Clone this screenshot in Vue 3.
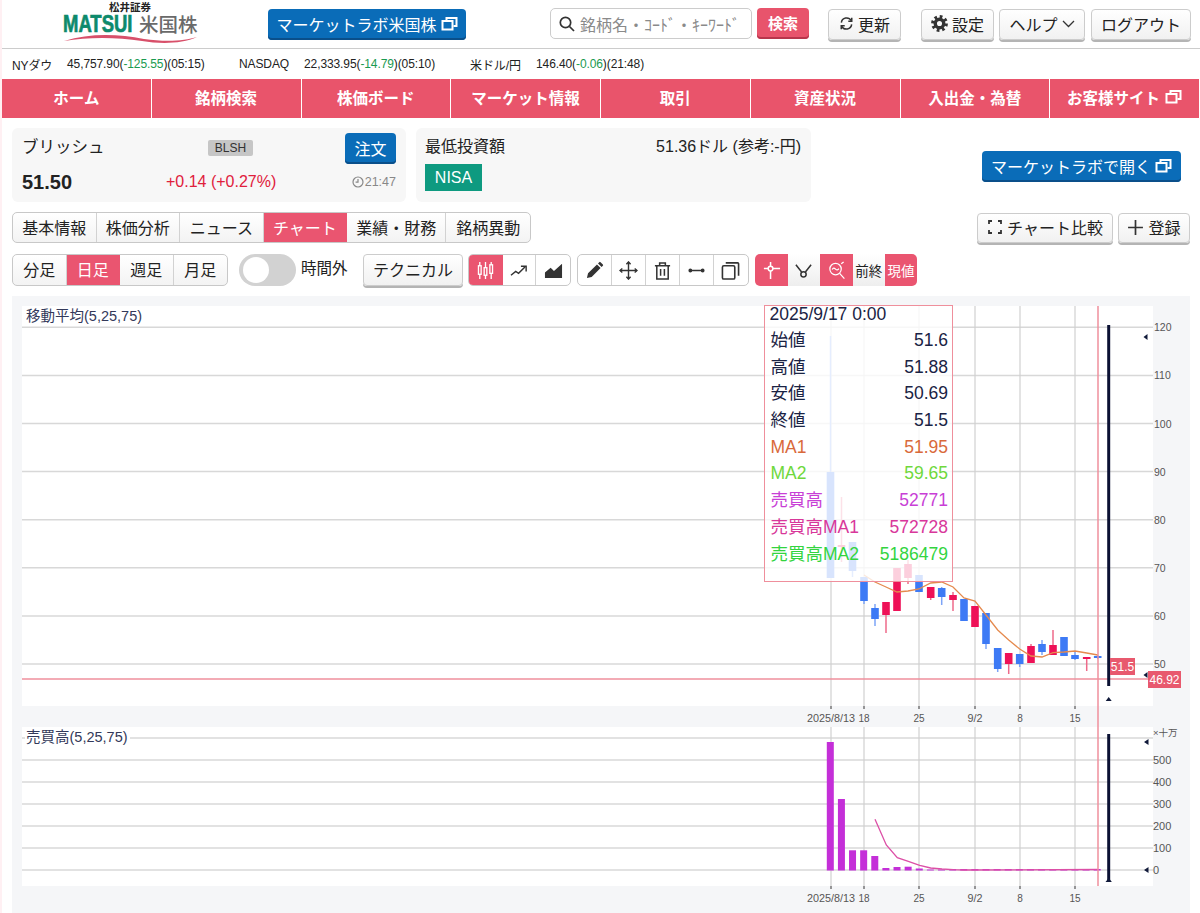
<template>
  <div class="page">
    <header class="top-bar">
      <svg class="logo" width="140" height="44" viewBox="0 0 140 44">
        <text x="47" y="10.5" class="logo-sub">松井証券</text>
        <text transform="translate(1 32) scale(.77 1)" class="logo-main">MATSUI</text>
        <text x="77" y="32" class="logo-jp">米国株</text>
        <path d="M2 41 C 28 33 56 34 82 39 C 103 42 123 41 135 37 C 120 44 98 44 80 41 C 54 37 26 37 2 41 Z" fill="#d8506a" />
      </svg>
      <button class="btn blue lab-top">
        マーケットラボ米国株
        <svg class="win" viewBox="0 0 16 14"><path d="M5 3V1h10v8h-3" /><rect x="1" y="4" width="10" height="8.5" /></svg>
      </button>
      <div class="search">
        <svg width="18" height="18" viewBox="0 0 18 18" fill="none" stroke="#333" stroke-width="1.7"><circle cx="7.5" cy="7.5" r="5.2" /><path d="M11.5 11.5L16 16" /></svg>
        <span>銘柄名・ｺｰﾄﾞ・ｷｰﾜｰﾄﾞ</span>
      </div>
      <button class="btn red search-btn">検索</button>
      <button class="btn plain reload">
        <svg width="15" height="15" viewBox="0 0 16 16" fill="none" stroke="#333" stroke-width="1.6"><path d="M2.5 7A5.6 5.6 0 0 1 13 5" /><path d="M13.5 9A5.6 5.6 0 0 1 3 11" /><path d="M13.6 1.8V5.6H9.9" /><path d="M2.4 14.2V10.4H6.1" /></svg>
        更新
      </button>
      <button class="btn plain settings">
        <svg width="17" height="17" viewBox="0 0 16 16" fill="none" stroke="#333"><circle cx="8" cy="8" r="6.4" stroke-width="3" stroke-dasharray="2.5 2.53" /><circle cx="8" cy="8" r="4" stroke-width="3.2" /></svg>
        設定
      </button>
      <button class="btn plain help">
        ヘルプ
        <svg width="13" height="8" viewBox="0 0 13 8" fill="none" stroke="#333" stroke-width="1.3"><path d="M1 1l5.5 5.5L12 1" /></svg>
      </button>
      <button class="btn plain logout">ログアウト</button>
    </header>

    <div class="ticker">
      <span>NYダウ</span><span>45,757.90(<em>-125.55</em>)(05:15)</span>
      <span>NASDAQ</span><span>22,333.95(<em>-14.79</em>)(05:10)</span>
      <span>米ドル/円</span><span>146.40(<em>-0.06</em>)(21:48)</span>
    </div>

    <nav class="main-nav">
      <a v-for="item in navItems" :key="item" href="#" @click.prevent>{{ item }}</a>
      <a href="#" @click.prevent>
        お客様サイト
        <svg class="win" viewBox="0 0 16 14"><path d="M5 3V1h10v8h-3" /><rect x="1" y="4" width="10" height="8.5" /></svg>
      </a>
    </nav>

    <section class="info-row">
      <div class="card stock">
        <div class="stock-top">
          <span class="stock-name">ブリッシュ</span>
          <span class="code">BLSH</span>
          <button class="btn blue order">注文</button>
        </div>
        <div class="stock-bottom">
          <strong>51.50</strong>
          <span class="change">+0.14 (+0.27%)</span>
          <span class="time">
            <svg width="12" height="12" viewBox="0 0 12 12" fill="none" stroke="#888" stroke-width="1.2"><circle cx="6" cy="6" r="5" /><path d="M6 3v3.2H3.6" /></svg>21:47
          </span>
        </div>
      </div>
      <div class="card invest">
        <div class="invest-top">
          <span>最低投資額</span>
          <span>51.36ドル (参考:-円)</span>
        </div>
        <span class="nisa">NISA</span>
      </div>
      <button class="btn blue lab-open">
        マーケットラボで開く
        <svg class="win" viewBox="0 0 16 14"><path d="M5 3V1h10v8h-3" /><rect x="1" y="4" width="10" height="8.5" /></svg>
      </button>
    </section>

    <div class="tab-row">
      <div class="seg tabs">
        <a v-for="tab in tabs" :key="tab" :class="{ on: tab === 'チャート' }">{{ tab }}</a>
      </div>
      <button class="btn plain compare">
        <svg width="16" height="16" viewBox="0 0 16 16" fill="none" stroke="#333" stroke-width="1.8"><path d="M5 2H2v3M11 2h3v3M5 14H2v-3M11 14h3v-3" /></svg>
        チャート比較
      </button>
      <button class="btn plain add">
        <svg width="17" height="17" viewBox="0 0 16 16" stroke="#333" stroke-width="1.6"><path d="M8 1v14M1 8h14" /></svg>
        登録
      </button>
    </div>

    <div class="tool-row">
      <div class="seg terms">
        <a v-for="term in terms" :key="term" :class="{ on: term === '日足' }">{{ term }}</a>
      </div>
      <div class="switch"><span></span></div>
      <span class="switch-label">時間外</span>
      <button class="btn plain technical">テクニカル</button>

      <div class="seg icons first">
        <a class="on">
          <svg viewBox="0 0 20 20" fill="none" stroke="#fff" stroke-width="1.4"><path d="M4 1v18M10 1v18M16 1v18" /><rect x="2.6" y="5" width="2.8" height="9" fill="#ea5570" /><rect x="8.6" y="7" width="2.8" height="8" fill="#ea5570" /><rect x="14.6" y="4" width="2.8" height="9" fill="#ea5570" /></svg>
        </a>
        <a>
          <svg viewBox="0 0 20 20" fill="none" stroke="#333" stroke-width="1.5"><path d="M1 15l5-4 3 2 7-7" /><path d="M11.5 5.5H17V11" /></svg>
        </a>
        <a>
          <svg viewBox="0 0 20 20" fill="#333"><path d="M1 18v-6l6-5 3.5 3.5L19 3v15z" /></svg>
        </a>
      </div>

      <div class="seg icons second">
        <a>
          <svg viewBox="0 0 20 20" fill="#333"><path d="M2 18l1.2-5L12.6 3.6l3.8 3.8L7 16.8zM13.7 2.5l1.3-1.3a1 1 0 0 1 1.4 0l2.4 2.4a1 1 0 0 1 0 1.4l-1.3 1.3z" /></svg>
        </a>
        <a>
          <svg viewBox="0 0 20 20" fill="none" stroke="#333" stroke-width="1.5"><path d="M10 1v18M1 10h18" /><path d="M7.8 3.5L10 1l2.2 2.5M7.8 16.5L10 19l2.2-2.5M3.5 7.8L1 10l2.5 2.2M16.5 7.8L19 10l-2.5 2.2" /></svg>
        </a>
        <a>
          <svg viewBox="0 0 20 20" fill="none" stroke="#333" stroke-width="1.6"><path d="M2 5h16M7 5V2h6v3M4 5v14h12V5M8 8.5v7M12 8.5v7" /></svg>
        </a>
        <a>
          <svg viewBox="0 0 20 20" fill="#333" stroke="#333" stroke-width="1.4"><path d="M3 10h14" /><circle cx="3.5" cy="10" r="1.3" /><circle cx="16.5" cy="10" r="1.3" /></svg>
        </a>
        <a>
          <svg viewBox="0 0 20 20" fill="none" stroke="#333" stroke-width="1.7"><rect x="1.5" y="5" width="13" height="14" rx="1.5" /><path d="M5 2h12.5a1 1 0 0 1 1 1v12.5" /></svg>
        </a>
      </div>

      <div class="seg icons third">
        <a class="on">
          <svg viewBox="0 0 20 20" fill="none" stroke="#fff" stroke-width="1.6"><circle cx="9" cy="8" r="2.5" /><path d="M9 1v4.5M9 10.500V19M2 8h4.500M11.500 8H19" /></svg>
        </a>
        <a class="grey">
          <svg viewBox="0 0 20 20" fill="none" stroke="#333" stroke-width="1.6"><circle cx="10" cy="14" r="2.8" /><path d="M2 4l6 7.5M18 4l-6 7.5" /></svg>
        </a>
        <a class="on">
          <svg viewBox="0 0 20 20" fill="none" stroke="#fff" stroke-width="1.3"><circle cx="9" cy="8.5" r="6" /><path d="M13.3 13l5 5.5M5.5 9c1-2 2-2 3.5-.5s2.5 1 3.5-.5M15 3l2.5-2" /></svg>
        </a>
        <a class="grey word">前終</a>
        <a class="on word">現値</a>
      </div>
    </div>

    <main class="chart-area">
      <svg class="pane" width="1178" height="431" viewBox="12 296 1178 431">
        <rect x="22" y="306" width="1131" height="400" fill="#fff" />
        <line v-for="g in priceGrid" :key="g.label" x1="22" x2="1153" :y1="g.y" :y2="g.y" class="grid" />
        <g v-for="d in dateTicks" :key="d.x">
          <line :x1="d.x" :x2="d.x" y1="306" y2="706" class="grid thin" />
          <line :x1="d.x" :x2="d.x" y1="706" y2="709" class="tick" />
          <text :x="d.x" y="722" text-anchor="middle" :class="d.big ? 'date big' : 'date'">{{ d.label }}</text>
        </g>
        <text x="26" y="321" class="title">移動平均(5,25,75)</text>
        <g v-for="c in candles" :key="c.x">
          <line :x1="c.x" :x2="c.x" :y1="c.high" :y2="c.low" :stroke="c.up ? '#ee6a8a' : '#7da4f7'" stroke-width="1.5" />
          <rect :x="c.x - 3.8" :y="c.top" width="7.6" :height="c.bottom - c.top" :fill="c.up ? '#ee1157' : '#3d7af5'" />
        </g>
        <polyline :points="maLine" fill="none" stroke="#e58a4e" stroke-width="1.3" />
        <line x1="22" x2="1148" y1="679" y2="679" class="red-line" />
        <line x1="1098" x2="1098" y1="306" y2="727" class="red-line" />
        <line x1="1108.7" x2="1108.7" y1="325" y2="686" class="cursor" />
        <path d="M1108.7 697l3 4h-6zM1143.5 337l4-3v6z" fill="#111a3a" />
        <path d="M1143.5 675l4-3v6z" fill="#111a3a" />
        <text v-for="g in priceGrid" :key="'p' + g.label" x="1154" :y="g.y + 4" class="axis small">{{ g.label }}</text>
        <rect x="1110" y="658" width="25" height="17" fill="#e8596e" />
        <text x="1122.5" y="670.5" text-anchor="middle" class="tag">51.5</text>
        <rect x="1148" y="671" width="33" height="17" fill="#e8596e" />
        <text x="1164.5" y="683.5" text-anchor="middle" class="tag">46.92</text>
      </svg>

      <svg class="pane" width="1178" height="186" viewBox="12 727 1178 186">
        <rect x="22" y="727" width="1131" height="159" fill="#fff" />
        <line v-for="g in volumeGrid" :key="g.y" x1="22" x2="1153" :y1="g.y" :y2="g.y" class="grid" />
        <g v-for="d in dateTicks" :key="d.x">
          <line :x1="d.x" :x2="d.x" y1="727" y2="886" class="grid thin" />
          <line :x1="d.x" :x2="d.x" y1="886" y2="889" class="tick" />
          <text :x="d.x" y="902" text-anchor="middle" :class="d.big ? 'date big' : 'date'">{{ d.label }}</text>
        </g>
        <rect x="25" y="728" width="105" height="19" fill="#fff" />
        <text x="26" y="742" class="title">売買高(5,25,75)</text>
        <rect v-for="b in volumes" :key="b.x" :x="b.x - 3.5" :y="b.top" width="7" :height="870.5 - b.top" fill="#c42fd8" />
        <polyline :points="volumeLine" fill="none" stroke="#dc4fa6" stroke-width="1.3" />
        <line x1="1098" x2="1098" y1="727" y2="886" class="red-line" />
        <line x1="1108.7" x2="1108.7" y1="734" y2="881" class="cursor" />
        <path d="M1105.5 882l3.2-4 3.2 4z" fill="#111a3a" />
        <path d="M1144 742l4.5-3v6zM1144 870l4.5-3v6z" fill="#111a3a" />
        <text x="1153" y="736" class="unit">×十万</text>
        <text v-for="g in volumeGrid.filter(v => v.label)" :key="g.label" x="1153" :y="g.y + 4" class="axis">{{ g.label }}</text>
      </svg>

      <div class="quote-box">
        <div class="date-row">2025/9/17 0:00</div>
        <div v-for="row in quoteRows" :key="row.name" class="quote-row" :style="{ color: row.color }">
          <span>{{ row.name }}</span><span>{{ row.value }}</span>
        </div>
      </div>
    </main>
  </div>
</template>

<script setup>
const navItems = ['ホーム', '銘柄検索', '株価ボード', 'マーケット情報', '取引', '資産状況', '入出金・為替']
const tabs = ['基本情報', '株価分析', 'ニュース', 'チャート', '業績・財務', '銘柄異動']
const terms = ['分足', '日足', '週足', '月足']

const quoteRows = [
  { name: '始値', value: '51.6', color: '#1a2344' },
  { name: '高値', value: '51.88', color: '#1a2344' },
  { name: '安値', value: '50.69', color: '#1a2344' },
  { name: '終値', value: '51.5', color: '#1a2344' },
  { name: 'MA1', value: '51.95', color: '#d9693a' },
  { name: 'MA2', value: '59.65', color: '#6fd83c' },
  { name: '売買高', value: '52771', color: '#c83fd6' },
  { name: '売買高MA1', value: '572728', color: '#d8379a' },
  { name: '売買高MA2', value: '5186479', color: '#33d43f' },
]

const priceGrid = [120, 110, 100, 90, 80, 70, 60, 50].map((p) => ({
  label: p,
  y: 664 - (p - 50) * 4.81,
}))

const volumeGrid = [
  { y: 738, label: '' },
  { y: 760, label: '500' },
  { y: 782, label: '400' },
  { y: 804, label: '300' },
  { y: 826, label: '200' },
  { y: 848, label: '100' },
  { y: 870, label: '0' },
]

const dateTicks = [
  { x: 831, label: '2025/8/13', big: true },
  { x: 864, label: '18' },
  { x: 919, label: '25' },
  { x: 975, label: '9/2', big: true },
  { x: 1020, label: '8' },
  { x: 1075, label: '15' },
]

// x, high, low, body top, body bottom, up (pixel values read off the chart)
const candles = [
  [830.5, 336, 578, 472, 578, 0],
  [841.5, 497, 562, 545, 547, 1],
  [852.5, 542, 577, 542, 571, 0],
  [864, 577, 604, 577, 601, 0],
  [875, 604, 626, 608, 619, 0],
  [886, 602, 633, 602, 615, 1],
  [897, 568, 611, 568, 611, 1],
  [908, 560, 584, 564, 578, 1],
  [919, 575, 592, 575, 592, 0],
  [930.7, 587, 600, 587, 598, 1],
  [941.7, 587, 605, 588, 597, 0],
  [953, 592, 611, 595, 600, 1],
  [964, 599, 621, 599, 621, 0],
  [975, 606, 627, 606, 627, 1],
  [986, 613, 649, 613, 644, 0],
  [997.7, 648, 672, 648, 669, 0],
  [1008.7, 653, 674, 653, 664, 1],
  [1019.7, 654, 667, 654, 664, 0],
  [1031, 644, 663, 646, 663, 1],
  [1042, 640, 655, 644, 652, 0],
  [1053, 630, 655, 645, 655, 1],
  [1064, 637, 656, 637, 656, 0],
  [1075, 651, 660, 655, 659, 0],
  [1086.7, 657, 671, 657, 659, 1],
  [1097.7, 655, 659, 656, 658, 0],
].map(([x, high, low, top, bottom, up]) => ({ x, high, low, top, bottom, up }))

const maLine = '864,575 875,582 886,587 897,592 908,591 919,589 930.7,583 941.7,582 953,587 964,598 975,601 986,615 997.7,630 1008.7,640 1019.7,649 1031,656 1042,657 1053,652.7 1064,652 1075,651 1086.7,653 1097.7,655'
const volumeLine = '875,819.3 886.3,845 897.3,857.7 908.3,861.3 919.7,865.3 930.7,868 942,869 953.3,869.7 964.3,870 1097.7,869.5'

const volumeTops = [742, 799, 850.3, 850.3, 856, 868, 867, 866.7, 868.5, 869.5, 869.5]
const volumes = Array.from({ length: 25 }, (_, i) => ({
  x: 830.3 + i * 11.12,
  top: volumeTops[i] ?? 869,
}))
</script>

<style scoped>
.page {
  width: 1198px; height: 913px; overflow: hidden; background: #fff;
  border-left: 2px solid #fff0f3; color: #222;
}
button { font-family: inherit; cursor: pointer; padding: 0; }
.btn {
  display: flex; align-items: center; justify-content: center; gap: 4px;
  border-radius: 4px; font-size: 16px; height: 31px; box-sizing: border-box; padding-bottom: 2px;
}
.btn.plain {
  background: linear-gradient(#fff, #f1f1f1); border: 1px solid #ccc; color: #222;
  box-shadow: 0 2px 0 #b4b4b4;
}
.btn.blue { background: #0a6cb8; border: 0; color: #fff; box-shadow: inset 0 -2px 0 #0a4f8a; }
.btn.red { background: #e8546c; border: 0; color: #fff; font-weight: 700; box-shadow: inset 0 -2px 0 #b8364c; }
.win { width: 17px; height: 14px; fill: none; stroke: #fff; stroke-width: 2; flex-shrink: 0; }

.top-bar {
  height: 49px; box-sizing: border-box; border-bottom: 1px solid #ccc;
  display: flex; align-items: flex-start; padding: 8px 0 0 60px; position: relative;
}
.logo { margin: -8px 66px 0 0; flex-shrink: 0; }
.logo-sub { font: 700 10.5px "Noto Sans CJK JP", sans-serif; fill: #222; }
.logo-main { font: 700 24px "Liberation Sans", sans-serif; fill: #0d8a6c; stroke: #0d8a6c; stroke-width: 0.7; }
.logo-jp { font: 500 19.5px "Noto Sans CJK JP", sans-serif; fill: #6a6a6a; }
.lab-top { width: 198px; margin: 1px 84px 0 0; }
.search {
  width: 202px; height: 31px; box-sizing: border-box; border: 1px solid #ccc; border-radius: 5px;
  display: flex; align-items: center; gap: 4px; padding-left: 7px; font-size: 16px; color: #8a8a8a;
  margin-right: 5px;
}
.search-btn { width: 52px; margin-right: 19px; font-size: 15px; }
.reload { width: 73px; margin: 1px 20px 0 0; }
.settings { width: 73px; margin: 1px 5px 0 0; }
.help { width: 86px; margin: 1px 6px 0 0; }
.logout { width: 100px; margin-top: 1px; }

.ticker {
  height: 30px; display: grid; align-items: center; padding-left: 10px; font-size: 12px;
  letter-spacing: -0.1px; grid-template-columns: 55px 172px 65px 166px 66px auto;
}
.ticker em { font-style: normal; color: #1a9a50; }

.main-nav { display: flex; height: 39px; background: #fff; }
.main-nav a {
  width: 150px; box-sizing: border-box; background: #e9546b; border-right: 1px solid #fff;
  display: flex; align-items: center; justify-content: center; gap: 5px; padding-bottom: 3px;
  color: #fff; font-size: 15.5px; font-weight: 700; text-decoration: none;
}

.info-row { display: flex; align-items: flex-start; padding: 10px 0 0 10px; }
.card { height: 74px; box-sizing: border-box; background: #f7f7f7; border-radius: 6px; }
.stock { width: 394px; padding: 5px 10px; }
.stock-top { display: flex; align-items: center; height: 31px; }
.stock-name { font-size: 16.5px; width: 186px; margin-top: -5px; }
.code { width: 45px; height: 16px; background: #c6c6c6; border-radius: 2px; font-size: 12px; text-align: center; line-height: 16px; color: #333; margin-top: -2px; }
.order { width: 51px; margin-left: 92px; }
.stock-bottom { display: flex; align-items: center; margin-top: 2px; height: 32px; }
.stock-bottom strong { font-size: 20px; width: 145px; }
.change { font-size: 16px; color: #e0203c; width: 187px; }
.time { display: flex; align-items: center; gap: 1px; font-size: 12.5px; color: #888; }
.invest { width: 395px; margin-left: 10px; padding: 5px 10px 0 9px; }
.invest-top { display: flex; justify-content: space-between; font-size: 16px; height: 31px; }
.nisa {
  display: block; width: 57px; height: 27px; background: #0e9a80; color: #fff; font-size: 16px;
  line-height: 27px; text-align: center;
}
.lab-open { width: 199px; margin: 23px 0 0 171px; }

.seg { display: flex; border: 1px solid #c8c8c8; border-radius: 5px; overflow: hidden; box-sizing: border-box; background: #fff; }
.seg a { display: flex; align-items: center; justify-content: center; font-size: 16px; border-right: 1px solid #d2d2d2; box-sizing: border-box; padding-bottom: 2px; }
.seg a:last-child { border-right: 0; }
.seg a.on { background: #ea5570; color: #fff; border-right-color: #ea5570; }

.tab-row { display: flex; align-items: flex-start; padding: 10px 0 0 10px; height: 52px; box-sizing: border-box; }
.tabs { width: 519px; height: 31px; background: linear-gradient(#fff, #f3f3f3); }
.tabs a { width: 84px; }
.tabs a:nth-child(5) { width: 100px; }
.compare { width: 136px; height: 30px; margin: 1px 5px 0 446px; }
.add { width: 72px; height: 30px; margin-top: 1px; }

.tool-row { display: flex; align-items: flex-start; padding: 0 0 0 10px; height: 42px; box-sizing: border-box; }
.terms { width: 216px; height: 32px; background: linear-gradient(#fff, #f3f3f3); }
.terms a { width: 54px; }
.switch { width: 57px; height: 32px; border-radius: 16px; background: #d2d2d2; margin-left: 11px; padding: 3px 0 0 4px; box-sizing: border-box; flex-shrink: 0; }
.switch span { display: block; width: 26px; height: 26px; border-radius: 50%; background: #fff; }
.switch-label { font-size: 15.5px; line-height: 30px; margin-left: 5px; width: 47px; white-space: nowrap; flex-shrink: 0; }
.technical { width: 100px; height: 32px; margin: 0 5px 0 15px; }
.icons { height: 32px; }
.icons a { width: 35px; padding-bottom: 0; }
.icons svg { width: 19px; height: 19px; }
.first { width: 103px; }
.second { width: 172px; margin-left: 6px; }
.third { width: 162px; margin-left: 6px; border: 0; }
.third a { width: 34.5px; border-right: 0; }
.third a.grey { background: linear-gradient(#fff, #eee); }
.third a.word { width: 34px; font-size: 13.5px; }

.chart-area {
  position: relative; width: 1178px; height: 617px; margin-left: 10px; background: #f5f6f8;
}
.pane { display: block; }
.grid { stroke: #d8d8d8; stroke-width: 1.5; }
.grid.thin { stroke: #d0d0d0; stroke-width: 1.2; }
.tick { stroke: #555; stroke-width: 1.2; }
.red-line { stroke: #ef8f9c; stroke-width: 1.5; }
.cursor { stroke: #0b1133; stroke-width: 3; }
.title { font-size: 14.5px; fill: #33395a; }
.date { font-size: 10px; fill: #555; }
.date.big { font-size: 10.8px; }
.axis { font-size: 11px; fill: #555; }
.axis.small { font-size: 10.5px; }
.unit { font-size: 9.5px; fill: #555; }
.tag { font-size: 12px; fill: #fff; }

.quote-box {
  position: absolute; left: 752px; top: 9px; width: 189px; height: 277px; box-sizing: border-box;
  border: 1.5px solid #ef8f9c; background: rgba(255, 255, 255, 0.8); padding: 0 4px 0 4.5px;
  font-size: 17.5px; color: #1a2344;
}
.date-row { height: 21px; line-height: 17px; }
.quote-row { display: flex; justify-content: space-between; height: 26.7px; line-height: 26.7px; padding-left: 1px; }
</style>

<style>
body {
  font-family: "Liberation Sans", "Noto Sans CJK JP", sans-serif;
}
</style>
